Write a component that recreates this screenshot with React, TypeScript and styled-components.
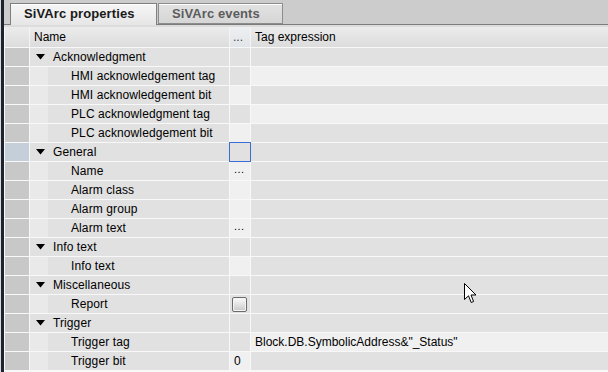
import styled, { createGlobalStyle } from "styled-components";

const GlobalStyle = createGlobalStyle`
  html, body {
    margin: 0;
    padding: 0;
    background: #cccccc;
  }
  body {
    font-family: "Liberation Sans", Arial, sans-serif;
    font-size: 12px;
    color: #000;
  }
`;

const Page = styled.div`
  position: relative;
  width: 608px;
  height: 372px;
  overflow: hidden;
  box-sizing: border-box;
  background: #cccccc;
  border-left: 1px solid #d8d8d8;
`;

const Frame = styled.div`
  display: flex;
  flex-direction: column;
  height: 100%;
  border-left: 3px solid #1e2231;
`;

const TabStrip = styled.div`
  display: flex;
  align-items: flex-end;
  height: 24px;
  padding-left: 6px;
  border-bottom: 1px solid #7c7c7c;
  background: #cccccc;
`;

const Tab = styled.div<{ $active?: boolean }>`
  box-sizing: border-box;
  width: ${(p) => (p.$active ? "147px" : "125px")};
  height: ${(p) => (p.$active ? "22px" : "21px")};
  margin-bottom: ${(p) => (p.$active ? "-1px" : "0")};
  margin-left: ${(p) => (p.$active ? "0" : "1px")};
  padding: 2px 0 0 13px;
  border: 1px solid ${(p) => (p.$active ? "#7f7f7f" : "#8c8c8c")};
  border-bottom: ${(p) => (p.$active ? "none" : "1px solid #8c8c8c")};
  background: ${(p) =>
    p.$active
      ? "linear-gradient(#f6f6f6, #e6e6e6)"
      : "linear-gradient(#e2e2e2, #d6d6d6)"};
  box-shadow: inset 0 1px 0 #ffffff;
  font-weight: bold;
  font-size: 13px;
  letter-spacing: 0.1px;
  color: ${(p) => (p.$active ? "#1a1a1a" : "#5c5c5c")};
  white-space: nowrap;
`;

const Spacer = styled.div`
  height: 2px;
  background: #dcdcdc;
`;

const Grid = styled.div`
  display: flex;
  flex-direction: column;
  gap: 1px;
  flex: 1;
  padding-left: 1px;
  background: #f8f8f8;
`;

const RowGrid = styled.div`
  display: grid;
  grid-template-columns: 24px 199px 20px 1fr;
  column-gap: 1px;
  background: #f8f8f8;
`;

const HeaderRow = styled(RowGrid)`
  height: 20px;
  background: #f4f4f4;
`;

const HeaderCell = styled.div<{ $dots?: boolean }>`
  display: flex;
  align-items: center;
  padding-left: ${(p) => (p.$dots ? "3px" : "4px")};
  background: ${(p) =>
    p.$dots
      ? "linear-gradient(#eef0f3, #e1e4e8)"
      : "linear-gradient(#ececec, #dcdcdc)"};
  color: ${(p) => (p.$dots ? "#444" : "#000")};
`;

const DataRow = styled(RowGrid)`
  height: 18px;
`;

const RowHead = styled.div<{ $selected?: boolean }>`
  background: ${(p) => (p.$selected ? "#c4cfd9" : "#c8c8c8")};
`;

const NameCell = styled.div<{ $child?: boolean }>`
  display: flex;
  align-items: center;
  background: ${(p) =>
    p.$child
      ? "linear-gradient(to right, #e9e9e9 18px, #e1e1e1 18px)"
      : "#e1e1e1"};
  padding-left: ${(p) => (p.$child ? "41px" : "6px")};
  white-space: nowrap;
  letter-spacing: 0.1px;
`;

const Caret = styled.svg`
  width: 9px;
  height: 6px;
  margin-right: 8px;
  flex-shrink: 0;
`;

const ValueCell = styled.div<{ $light?: boolean; $focus?: boolean }>`
  display: flex;
  align-items: center;
  padding-left: 4px;
  background: ${(p) => (p.$light ? "#f0f0f0" : "#e1e1e1")};
  outline: ${(p) => (p.$focus ? "1px solid #3a6ed4" : "none")};
  white-space: nowrap;
`;

const DotsText = styled.span`
  font-size: 11px;
  letter-spacing: 0.5px;
  margin-top: -4px;
`;

const CheckBox = styled.div`
  box-sizing: border-box;
  width: 15px;
  height: 15px;
  margin-left: -2px;
  border: 1px solid #6c6c6c;
  border-radius: 2px;
  background: linear-gradient(#fbfbfb, #c9c9c9);
  box-shadow: inset 0 0 0 1px #f4f4f4;
`;

const Cursor = styled.svg`
  position: absolute;
  left: 463px;
  top: 283px;
  width: 13px;
  height: 21px;
`;

type Shade = "dark" | "light";

type RowData = {
  label: string;
  group?: boolean;
  dots?: Shade;
  tag?: Shade;
  dotsText?: string;
  tagText?: string;
  checkbox?: boolean;
  selected?: boolean;
  focus?: boolean;
};

const rows: RowData[] = [
  { label: "Acknowledgment", group: true },
  { label: "HMI acknowledgement tag", tag: "light" },
  { label: "HMI acknowledgement bit", dots: "light" },
  { label: "PLC acknowledgment tag", tag: "light" },
  { label: "PLC acknowledgement bit", dots: "light" },
  { label: "General", group: true, selected: true, focus: true },
  { label: "Name", dots: "light", dotsText: "..." },
  { label: "Alarm class", dots: "light" },
  { label: "Alarm group", dots: "light" },
  { label: "Alarm text", dots: "light", dotsText: "..." },
  { label: "Info text", group: true },
  { label: "Info text", dots: "light" },
  { label: "Miscellaneous", group: true },
  { label: "Report", checkbox: true },
  { label: "Trigger", group: true },
  { label: "Trigger tag", tag: "light", tagText: 'Block.DB.SymbolicAddress&"_Status"' },
  { label: "Trigger bit", dots: "light", dotsText: "0" },
];

function PropertyRow({ row }: { row: RowData }) {
  return (
    <DataRow>
      <RowHead $selected={row.selected} />
      <NameCell $child={!row.group}>
        {row.group && (
          <Caret viewBox="0 0 9 6">
            <polygon points="0,0 9,0 4.5,5.5" fill="#000" />
          </Caret>
        )}
        {row.label}
      </NameCell>
      <ValueCell $light={row.dots === "light"} $focus={row.focus}>
        {row.checkbox && <CheckBox />}
        {row.dotsText === "..." && <DotsText>...</DotsText>}
        {row.dotsText && row.dotsText !== "..." && row.dotsText}
      </ValueCell>
      <ValueCell $light={row.tag === "light"}>{row.tagText}</ValueCell>
    </DataRow>
  );
}

export default function App() {
  return (
    <>
      <GlobalStyle />
      <Page>
        <Frame>
          <TabStrip>
            <Tab $active>SiVArc properties</Tab>
            <Tab>SiVArc events</Tab>
          </TabStrip>
          <Spacer />
          <Grid>
            <HeaderRow>
              <HeaderCell />
              <HeaderCell>Name</HeaderCell>
              <HeaderCell $dots>...</HeaderCell>
              <HeaderCell>Tag expression</HeaderCell>
            </HeaderRow>
            {rows.map((row, i) => (
              <PropertyRow key={i} row={row} />
            ))}
          </Grid>
        </Frame>
        <Cursor viewBox="0 0 13 21">
          <path
            d="M0.5 0.5 L0.5 16.5 L4.5 12.8 L7.2 19.5 L9.6 18.5 L7 12 L12 12 Z"
            fill="#fff"
            stroke="#000"
            strokeWidth="1"
            strokeLinejoin="miter"
          />
        </Cursor>
      </Page>
    </>
  );
}
